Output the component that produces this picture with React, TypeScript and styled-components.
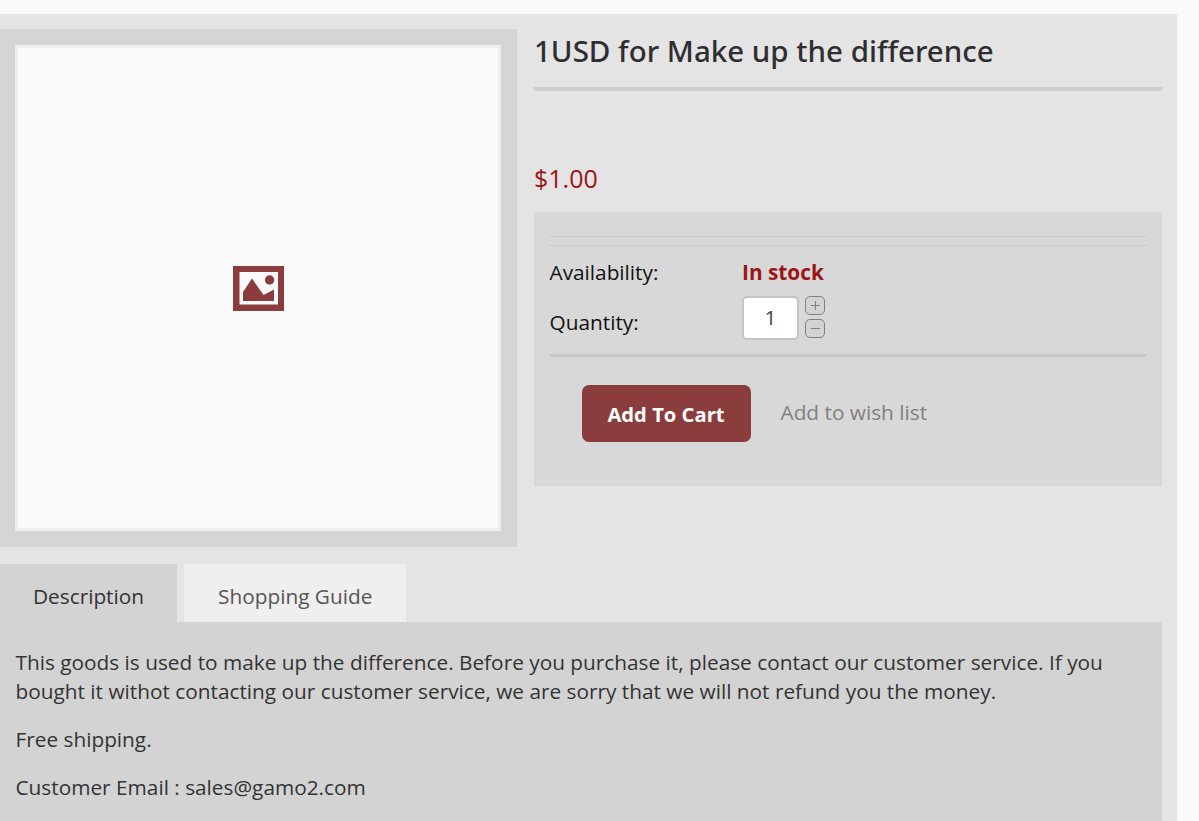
import { FC } from "react";
import styled, { createGlobalStyle } from "styled-components";

const GlobalStyle = createGlobalStyle`
  html, body {
    margin: 0;
    height: 100%;
    overflow: hidden;
    background: #fafafa;
    font-family: "Open Sans", "Liberation Sans", sans-serif;
  }
`;

const Page = styled.div`
  padding-top: 14px;
  height: 821px;
  box-sizing: border-box;
`;

const Panel = styled.main`
  width: 1177px;
  height: 807px;
  padding: 15px 15px 0 0;
  box-sizing: border-box;
  background: #e5e4e5;
  overflow: hidden;
`;

const Product = styled.section`
  display: grid;
  grid-template-columns: 517px 628px;
  column-gap: 17px;
`;

const ImageFrame = styled.div`
  height: 518px;
  padding: 16px 16px 16px 15px;
  box-sizing: border-box;
  background: #d5d5d5;
`;

const ImageBox = styled.div`
  display: flex;
  align-items: center;
  justify-content: center;
  height: 100%;
  box-sizing: border-box;
  border: 3px solid #eeeeee;
  background: #fafafa;
`;

const Info = styled.div`
  display: flex;
  flex-direction: column;
`;

const Title = styled.h1`
  margin: 0;
  height: 62px;
  padding-top: 3px;
  box-sizing: border-box;
  border-bottom: 4px solid #d0cfd0;
  font-family: "Noto Sans", "Open Sans", sans-serif;
  font-size: 29.5px;
  line-height: 38px;
  font-weight: 500;
  color: #2e2e30;
`;

const Price = styled.div`
  margin-top: 66px;
  height: 55px;
  font-size: 25px;
  line-height: 42px;
  color: #9c1414;
`;

const OptionsBox = styled.div`
  height: 274px;
  padding: 24px 16px 0 15.5px;
  box-sizing: border-box;
  background: #d8d8d8;
`;

const DoubleRule = styled.div`
  height: 8px;
  border-top: 1px solid #c6c6c6;
  border-bottom: 1px solid #c6c6c6;
`;

const OptionRow = styled.div<{ $height: number }>`
  display: grid;
  grid-template-columns: 192.5px 1fr;
  align-items: center;
  height: ${({ $height }) => $height}px;
`;

const OptionLabel = styled.span`
  font-size: 20.8px;
  color: #111111;
`;

const QuantityLabel = styled(OptionLabel)`
  align-self: start;
  margin-top: 10px;
`;

const Stock = styled.span`
  font-size: 20.8px;
  font-weight: 700;
  color: #9c1414;
`;

const QuantityGroup = styled.div`
  display: flex;
  align-self: start;
  align-items: flex-start;
  gap: 6px;
  margin-top: -2px;
`;

const QuantityInput = styled.div`
  width: 57px;
  height: 44px;
  box-sizing: border-box;
  border: 2px solid #c4c4c4;
  border-radius: 5px;
  background: #ffffff;
  font-size: 20.8px;
  line-height: 38px;
  text-align: center;
  color: #444444;
`;

const Steppers = styled.div`
  display: flex;
  flex-direction: column;
  gap: 4px;
`;

const StepButton = styled.div`
  width: 20px;
  height: 19px;
  box-sizing: border-box;
  border: 1.5px solid #808080;
  border-radius: 5px;
  background: #d3d3d3;
  color: #808080;
  display: flex;
  align-items: center;
  justify-content: center;
`;

const Rule = styled.div`
  height: 3px;
  background: #c6c6c6;
`;

const Actions = styled.div`
  display: flex;
  align-items: center;
  gap: 30px;
  margin-top: 28px;
  padding-left: 32px;
`;

const CartButton = styled.button`
  width: 169px;
  height: 57px;
  border: 0;
  border-radius: 7px;
  background: #8b3c3c;
  color: #ffffff;
  font-family: inherit;
  font-size: 20.2px;
  font-weight: 700;
`;

const WishLink = styled.a`
  font-size: 20.8px;
  color: #808080;
  margin-top: -4px;
`;

const Tabs = styled.nav`
  display: flex;
  gap: 7px;
  margin-top: 17px;
`;

const Tab = styled.div<{ $active?: boolean }>`
  height: 58px;
  padding: 0 ${({ $active }) => ($active ? "33px" : "34px")};
  box-sizing: border-box;
  background: ${({ $active }) => ($active ? "#d3d3d3" : "#efefef")};
  color: ${({ $active }) => ($active ? "#333333" : "#555555")};
  font-size: 20.8px;
  line-height: 64px;
`;

const TabContent = styled.section`
  width: 1162px;
  padding: 26px 16px 0 15.5px;
  height: 220px;
  box-sizing: border-box;
  background: #d3d3d3;
  color: #333333;
  font-size: 20.8px;
  line-height: 29px;

  p {
    margin: 0 0 19px;
  }
`;

const PictureIcon: FC = () => (
  <svg width="51" height="45" viewBox="0 0 51 45">
    <path fill="#8b3c3c" fillRule="evenodd" d="M0 0h51v45H0zM6.5 6v32.500h38.500V6z" />
    <circle cx="36.600" cy="14" r="4.700" fill="#8b3c3c" />
    <path fill="#8b3c3c" d="M10 35V26L19 12.600 30.600 29 41 23.500V35z" />
  </svg>
);

const PlusIcon: FC = () => (
  <svg width="11" height="11" viewBox="0 0 11 11">
    <path d="M5.5 1v9M1 5.5h9" stroke="currentColor" strokeWidth="1" />
  </svg>
);

const MinusIcon: FC = () => (
  <svg width="11" height="11" viewBox="0 0 11 11">
    <path d="M1 5.5h9" stroke="currentColor" strokeWidth="1" />
  </svg>
);

const App: FC = () => {
  return (
    <>
      <GlobalStyle />
      <Page>
        <Panel>
          <Product>
            <ImageFrame>
              <ImageBox>
                <PictureIcon />
              </ImageBox>
            </ImageFrame>
            <Info>
              <Title>1USD for Make up the difference</Title>
              <Price>$1.00</Price>
              <OptionsBox>
                <DoubleRule />
                <OptionRow $height={52}>
                  <OptionLabel>Availability:</OptionLabel>
                  <Stock>In stock</Stock>
                </OptionRow>
                <OptionRow $height={56}>
                  <QuantityLabel>Quantity:</QuantityLabel>
                  <QuantityGroup>
                    <QuantityInput>1</QuantityInput>
                    <Steppers>
                      <StepButton>
                        <PlusIcon />
                      </StepButton>
                      <StepButton>
                        <MinusIcon />
                      </StepButton>
                    </Steppers>
                  </QuantityGroup>
                </OptionRow>
                <Rule />
                <Actions>
                  <CartButton>Add To Cart</CartButton>
                  <WishLink>Add to wish list</WishLink>
                </Actions>
              </OptionsBox>
            </Info>
          </Product>
          <Tabs>
            <Tab $active>Description</Tab>
            <Tab>Shopping Guide</Tab>
          </Tabs>
          <TabContent>
            <p>
              This goods is used to make up the difference. Before you purchase it, please contact our
              customer service. If you bought it withot contacting our customer service, we are sorry
              that we will not refund you the money.
            </p>
            <p>Free shipping.</p>
            <p>Customer Email : sales@gamo2.com</p>
          </TabContent>
        </Panel>
      </Page>
    </>
  );
};

export default App;
